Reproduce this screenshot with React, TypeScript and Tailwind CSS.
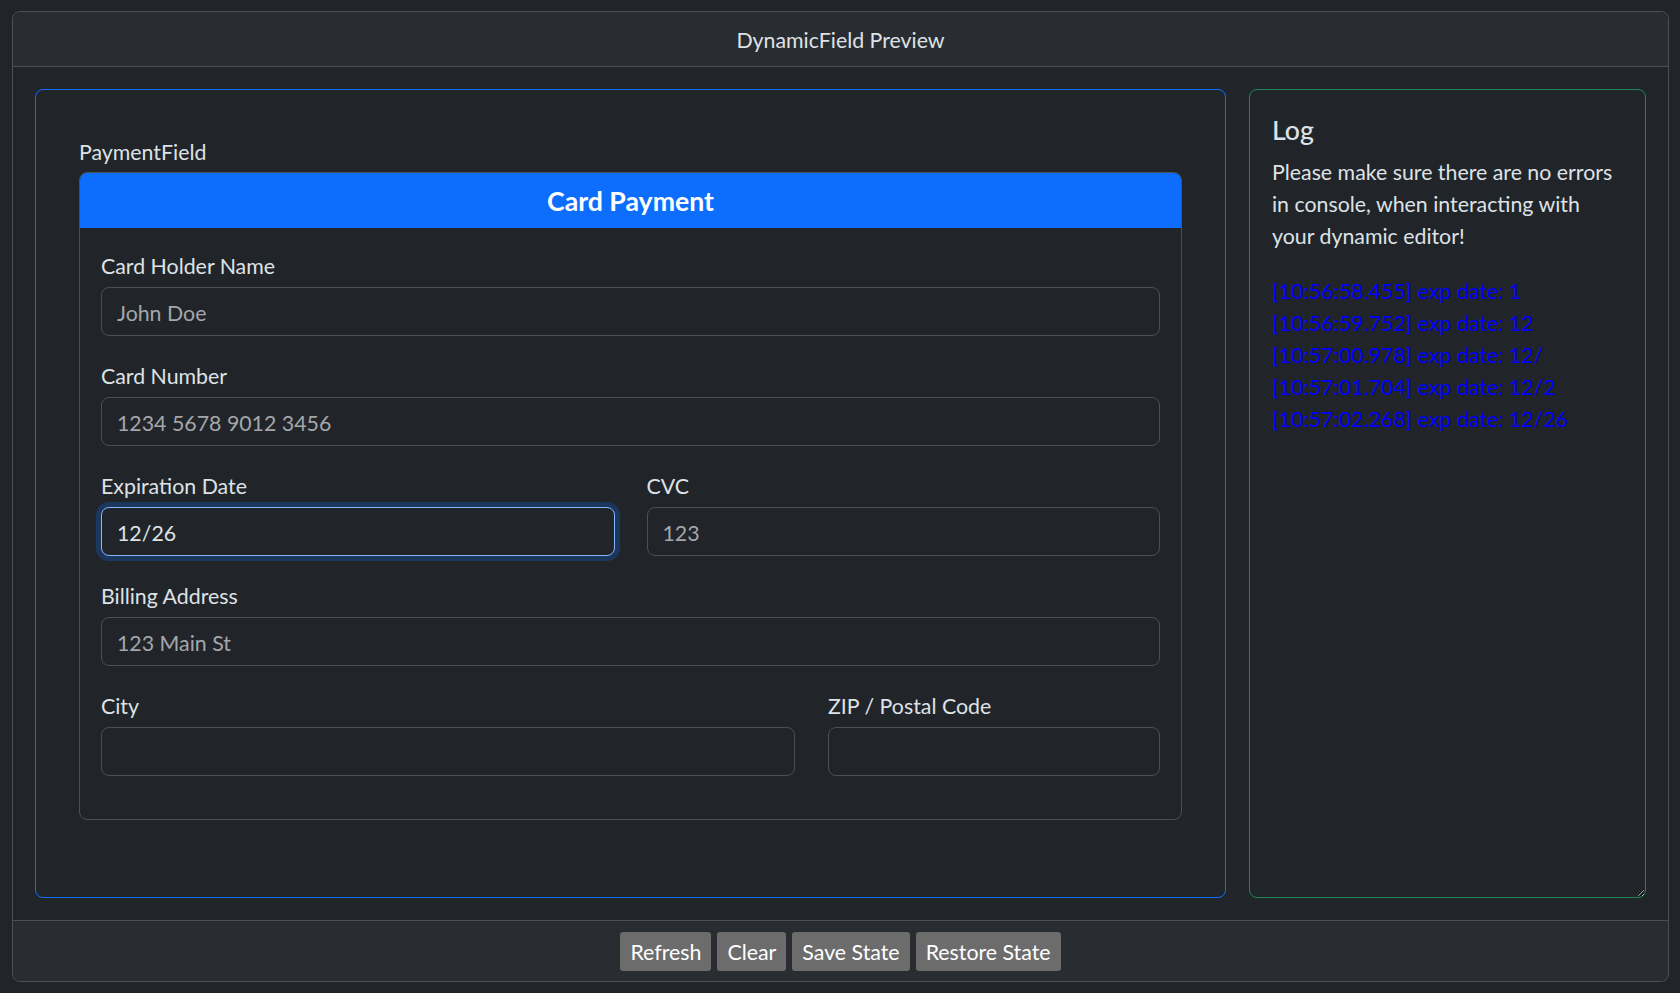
import { useState } from "react";

const font = "font-['Lato','Open_Sans',sans-serif]";

type FieldProps = {
  label: string;
  placeholder?: string;
  value?: string;
  focused?: boolean;
};

const Field = ({ label, placeholder, value, focused }: FieldProps) => {
  const [text, setText] = useState(value ?? "");
  return (
    <div className="flex flex-col">
      <label className="mb-[5px] leading-[32px] text-[#dee2e6]">{label}</label>
      <input
        className={
          focused
            ? "h-[49px] w-full rounded-[8px] border border-[#86b7fe] bg-[#212529] px-[15px] pt-[2px] text-[#dee2e6] shadow-[0_0_0_5px_rgba(13,110,253,0.25)] outline-none"
            : "h-[49px] w-full rounded-[8px] border border-[#495057] bg-[#212529] px-[15px] pt-[2px] text-[#dee2e6] outline-none placeholder:text-[#a3a7ab]"
        }
        placeholder={placeholder}
        value={text}
        onChange={(e) => setText(e.target.value)}
      />
    </div>
  );
};

const logs = [
  "[10:56:58.455] exp date: 1",
  "[10:56:59.752] exp date: 12",
  "[10:57:00.978] exp date: 12/",
  "[10:57:01.704] exp date: 12/2",
  "[10:57:02.268] exp date: 12/26",
];

export default function App() {
  return (
    <div className={`${font} h-screen bg-[#212529] pt-[11px] pl-[12px] pr-[11px] text-[21.33px] text-[#dee2e6]`}>
      <div className="flex h-[971px] flex-col rounded-[8px] border border-[#495057]">
        <header className="flex h-[55px] shrink-0 items-center justify-center rounded-t-[8px] border-b border-[#495057] bg-[#292d32] pt-[4px]">
          DynamicField Preview
        </header>

        <main className="flex flex-1 gap-[23px] p-[22px]">
          <section className="flex-1 rounded-[8px] border border-[#0d6efd] px-[43px] pt-[46px]">
            <div className="mb-[4px] leading-[32px]">PaymentField</div>
            <div className="overflow-hidden rounded-[8px] border border-[#495057]">
              <div className="flex h-[55px] items-center justify-center bg-[#0d6efd] text-[26.67px] font-bold text-white">
                Card Payment
              </div>
              <div className="flex flex-col gap-[24px] px-[21px] pt-[22px] pb-[43px]">
                <Field label="Card Holder Name" placeholder="John Doe" />
                <Field label="Card Number" placeholder="1234 5678 9012 3456" />
                <div className="grid grid-cols-2 gap-[32px]">
                  <Field label="Expiration Date" value="12/26" focused />
                  <Field label="CVC" placeholder="123" />
                </div>
                <Field label="Billing Address" placeholder="123 Main St" />
                <div className="grid grid-cols-[694px_1fr] gap-[33px]">
                  <Field label="City" />
                  <Field label="ZIP / Postal Code" />
                </div>
              </div>
            </div>
          </section>

          <aside className="w-[397px] resize overflow-auto rounded-[8px] border border-[#198754] px-[22px] pt-[24px]">
            <h5 className="mb-[10px] text-[26.67px] font-medium leading-[32px]">Log</h5>
            <p className="mb-[23px] leading-[32px]">
              Please make sure there are no errors in console, when interacting with your dynamic editor!
            </p>
            <div className="flex flex-col leading-[32px] text-[#0000ff]">
              {logs.map((l) => (
                <div key={l}>{l}</div>
              ))}
            </div>
          </aside>
        </main>

        <footer className="flex h-[61px] shrink-0 items-center justify-center gap-[6px] rounded-b-[8px] border-t border-[#495057] bg-[#292d32]">
          {["Refresh", "Clear", "Save State", "Restore State"].map((b) => (
            <button key={b} className="h-[39px] rounded-[3px] bg-[#6c6c6c] px-[10px] pt-[3px] text-white">
              {b}
            </button>
          ))}
        </footer>
      </div>
    </div>
  );
}
